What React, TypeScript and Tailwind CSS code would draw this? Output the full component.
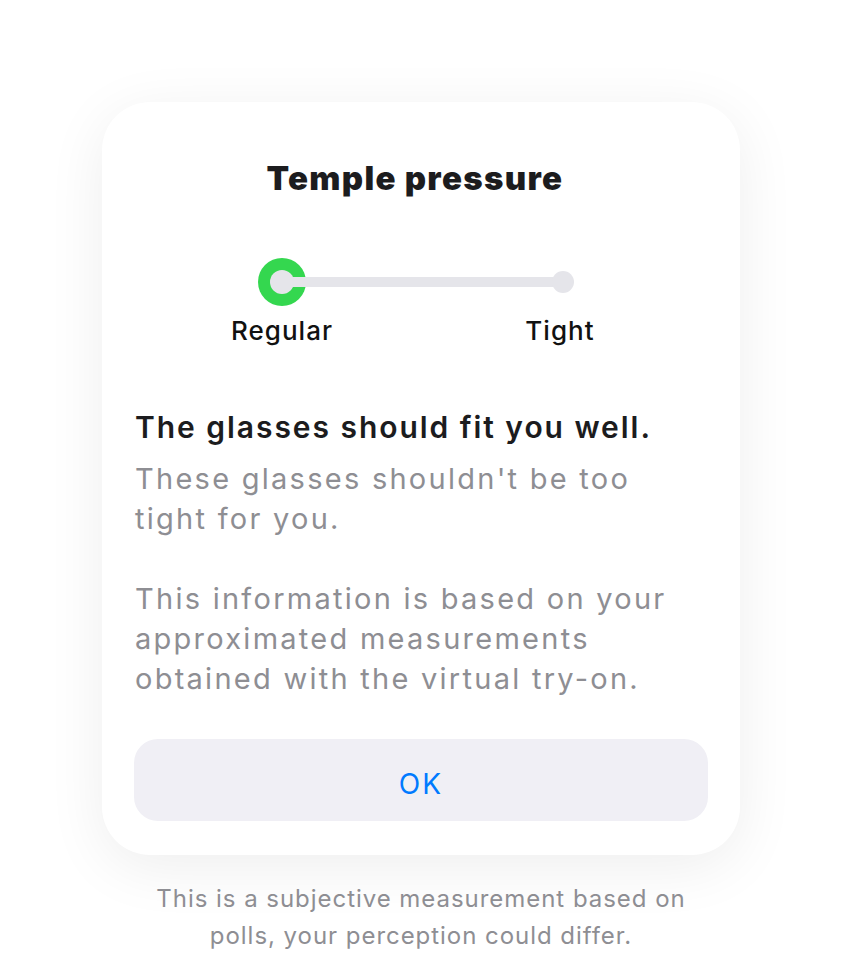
export default function App() {
  return (
    <div
      className="min-h-[958px] w-full bg-white flex flex-col items-center pt-[102px]"
      style={{ fontFamily: 'Inter, "Noto Sans", sans-serif' }}
    >
      <div className="w-[638px] bg-white rounded-[48px] shadow-[0_12px_60px_rgba(0,0,0,0.07)] px-8 pt-[56px] pb-[34px]">
        <h1 className="pr-[12px] text-center text-[33px] leading-[40px] font-black tracking-[0.04em] text-[#1c1c1e]">
          Temple pressure
        </h1>

        <div className="mt-[60px] flex flex-col items-center">
          <div className="relative w-[329px] h-[48px] translate-x-[1px]">
            <div className="absolute left-0 top-0 w-[48px] h-[48px] rounded-full bg-[#34d74f]" />
            <div className="absolute left-[24px] right-[24px] top-[19px] h-[10px] bg-[#e5e5ea]" />
            <div className="absolute left-[12px] top-[12px] w-[24px] h-[24px] rounded-full bg-[#e5e5ea]" />
            <div className="absolute right-[13px] top-[13px] w-[22px] h-[22px] rounded-full bg-[#e5e5ea]" />
          </div>
          <div className="mt-[8px] w-[398px] flex justify-between text-[26px] leading-[34px] font-medium tracking-[0.04em] text-[#111]">
            <span className="w-[120px] text-center">Regular</span>
            <span className="w-[120px] text-center">Tight</span>
          </div>
        </div>

        <div className="mt-[59px] px-[1px]">
          <p className="text-[30px] leading-[40px] font-semibold tracking-[0.065em] text-[#1c1c1e]">
            The glasses should fit you well.
          </p>
          <p className="mt-[12px] text-[29px] leading-[40px] tracking-[0.078em] text-[#8e8e93]">
            These glasses shouldn't be too tight for you.
          </p>
          <p className="mt-[40px] text-[29px] leading-[40px] tracking-[0.078em] text-[#8e8e93]">
            This information is based on your approximated measurements obtained with the virtual
            try-on.
          </p>
        </div>

        <button className="mt-[40px] w-full h-[82px] pt-[8px] rounded-[24px] bg-[#f0eff5] text-[#007aff] text-[28px] tracking-[0.08em] flex items-center justify-center">
          OK
        </button>
      </div>

      <p className="mt-[25px] w-[560px] text-center text-[24px] leading-[37px] tracking-[0.04em] text-[#8e8e93]">
        This is a subjective measurement based on polls, your perception could differ.
      </p>
    </div>
  );
}
